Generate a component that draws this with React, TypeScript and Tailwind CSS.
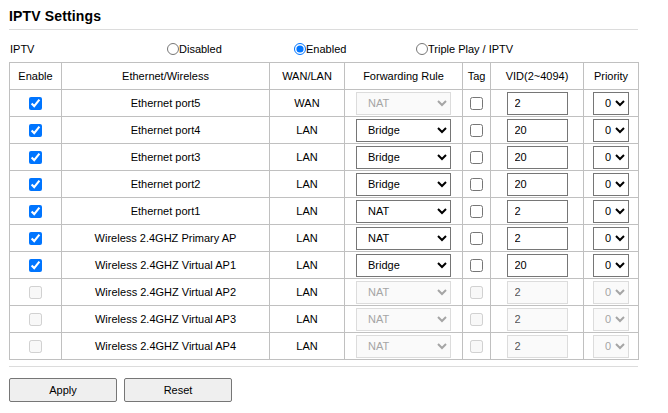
import React from "react";

type Row = {
  name: string;
  mode: string;
  rule: string;
  vid: string;
  enabled: boolean;
  ruleLocked?: boolean;
};

const rows: Row[] = [
  { name: "Ethernet port5", mode: "WAN", rule: "NAT", vid: "2", enabled: true, ruleLocked: true },
  { name: "Ethernet port4", mode: "LAN", rule: "Bridge", vid: "20", enabled: true },
  { name: "Ethernet port3", mode: "LAN", rule: "Bridge", vid: "20", enabled: true },
  { name: "Ethernet port2", mode: "LAN", rule: "Bridge", vid: "20", enabled: true },
  { name: "Ethernet port1", mode: "LAN", rule: "NAT", vid: "2", enabled: true },
  { name: "Wireless 2.4GHZ Primary AP", mode: "LAN", rule: "NAT", vid: "2", enabled: true },
  { name: "Wireless 2.4GHZ Virtual AP1", mode: "LAN", rule: "Bridge", vid: "20", enabled: true },
  { name: "Wireless 2.4GHZ Virtual AP2", mode: "LAN", rule: "NAT", vid: "2", enabled: false },
  { name: "Wireless 2.4GHZ Virtual AP3", mode: "LAN", rule: "NAT", vid: "2", enabled: false },
  { name: "Wireless 2.4GHZ Virtual AP4", mode: "LAN", rule: "NAT", vid: "2", enabled: false },
];

const cell = "border border-[#c0c0c0] text-center align-middle h-[27px] p-0";
const selectCls =
  "h-[23px] border border-[#767676] bg-white pl-[7px] text-black disabled:border-[#dcdcdc] disabled:bg-[#fafafa] disabled:text-[#a5a5a5]";

const App: React.FC = () => {
  return (
    <div className="min-h-[413px] bg-white px-[9px] pt-[8px] text-[11px] text-black font-['Liberation_Sans',Arial,sans-serif]">
      <div className="w-[629px]">
        <h2 className="border-b border-[#dcdcdc] pb-[4px] text-[14px] font-bold leading-[17px] tracking-[0.15px]">
          IPTV Settings
        </h2>

        <div className="mt-[8px] flex h-[22px] items-center">
          <span className="w-[158px] pl-[1px]">IPTV</span>
          <label className="flex w-[127px] items-center">
            <input type="radio" name="iptv" className="m-0 h-[12px] w-[12px]" />
            <span>Disabled</span>
          </label>
          <label className="flex w-[122px] items-center">
            <input type="radio" name="iptv" defaultChecked className="m-0 h-[12px] w-[12px]" />
            <span>Enabled</span>
          </label>
          <label className="flex items-center">
            <input type="radio" name="iptv" className="m-0 h-[12px] w-[12px]" />
            <span>Triple Play / IPTV</span>
          </label>
        </div>

        <table className="mt-[2px] w-[629px] table-fixed border-collapse">
          <colgroup>
            <col className="w-[52px]" />
            <col className="w-[208px]" />
            <col className="w-[75px]" />
            <col className="w-[118px]" />
            <col className="w-[28px]" />
            <col className="w-[93px]" />
            <col className="w-[55px]" />
          </colgroup>
          <thead>
            <tr>
              <th className={`${cell} font-normal`}>Enable</th>
              <th className={`${cell} font-normal`}>Ethernet/Wireless</th>
              <th className={`${cell} font-normal`}>WAN/LAN</th>
              <th className={`${cell} font-normal`}>Forwarding Rule</th>
              <th className={`${cell} font-normal`}>Tag</th>
              <th className={`${cell} font-normal`}>VID(2~4094)</th>
              <th className={`${cell} font-normal`}>Priority</th>
            </tr>
          </thead>
          <tbody>
            {rows.map((row) => (
              <tr key={row.name}>
                <td className={cell}>
                  <input
                    type="checkbox"
                    defaultChecked={row.enabled}
                    disabled={!row.enabled}
                    className="m-0 h-[13px] w-[13px] align-middle"
                  />
                </td>
                <td className={cell}>{row.name}</td>
                <td className={cell}>{row.mode}</td>
                <td className={cell}>
                  <select
                    defaultValue={row.rule}
                    disabled={!row.enabled || row.ruleLocked}
                    className={`${selectCls} w-[95px] align-middle`}
                  >
                    <option value="NAT">NAT</option>
                    <option value="Bridge">Bridge</option>
                  </select>
                </td>
                <td className={cell}>
                  <input
                    type="checkbox"
                    disabled={!row.enabled}
                    className="m-0 h-[13px] w-[13px] align-middle"
                  />
                </td>
                <td className={cell}>
                  <input
                    type="text"
                    defaultValue={row.vid}
                    disabled={!row.enabled}
                    className="h-[23px] w-[61px] border border-[#767676] bg-white pl-[7px] align-middle text-black disabled:border-[#dcdcdc] disabled:bg-[#fafafa] disabled:text-[#555]"
                  />
                </td>
                <td className={cell}>
                  <select
                    defaultValue="0"
                    disabled={!row.enabled}
                    className={`${selectCls} w-[36px] pl-[6px] align-middle`}
                  >
                    {["0", "1", "2", "3", "4", "5", "6", "7"].map((p) => (
                      <option key={p} value={p}>
                        {p}
                      </option>
                    ))}
                  </select>
                </td>
              </tr>
            ))}
          </tbody>
        </table>

        <div className="mt-[6px] border-t border-[#dcdcdc]" />

        <div className="mt-[11px] flex gap-[7px]">
          <button className="h-[24px] w-[108px] rounded-[2px] border border-[#767676] bg-[#efefef]">
            Apply
          </button>
          <button className="h-[24px] w-[108px] rounded-[2px] border border-[#767676] bg-[#efefef]">
            Reset
          </button>
        </div>
      </div>
    </div>
  );
};

export default App;
